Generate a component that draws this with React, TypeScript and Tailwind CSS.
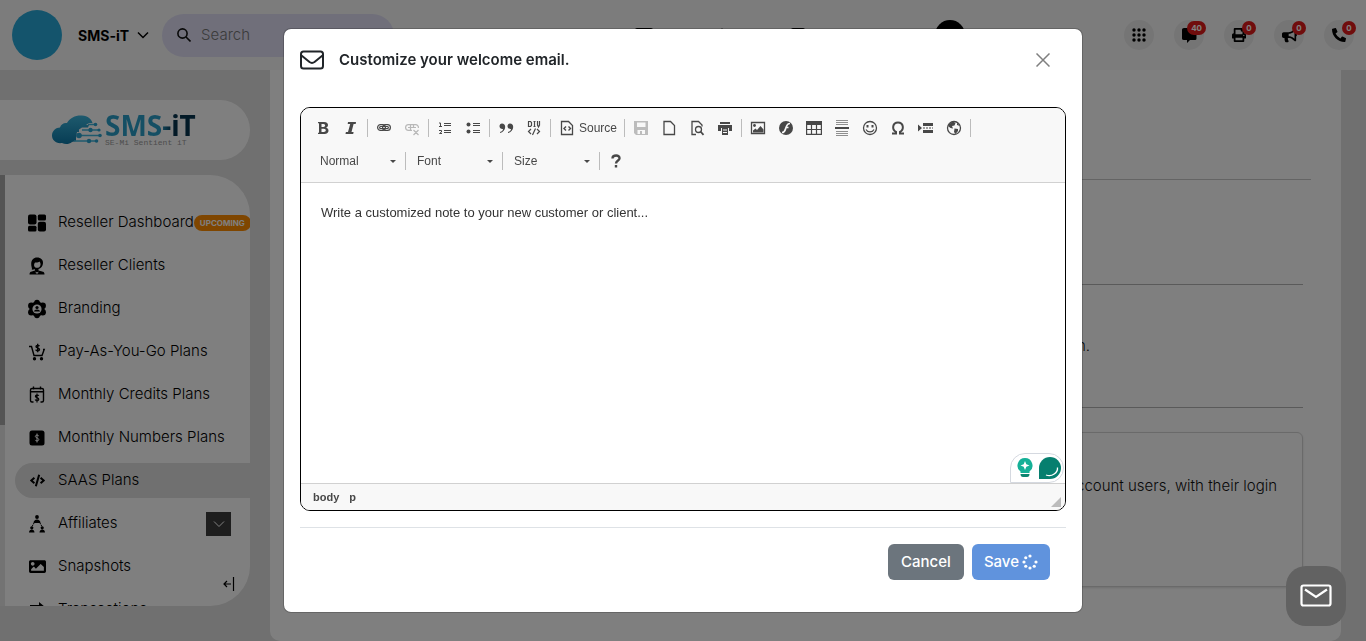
import type { ReactNode } from "react";
import { FaBullhorn, FaCode, FaImage, FaPhoneAlt, FaPrint } from "react-icons/fa";

const BRAND = "SMS-iT";

function Cloud() {
  return (
    <svg viewBox="0 0 50 30" className="h-[30px] w-[50px]">
      <defs>
        <linearGradient id="cloud" x1="0" y1="0" x2="0" y2="1">
          <stop offset="0" stopColor="#3cb4dc" />
          <stop offset="1" stopColor="#0e7aa8" />
        </linearGradient>
      </defs>
      <path
        fill="url(#cloud)"
        d="M10 28C4 29 0 25 0 20.500C0 16 4 12.500 8 12.500C9 9 12 7.500 15 8C18 2.500 24 0 30 0.500C36 1 39.500 4 40.500 8H37L34 10H37L36 12.500H30L27 14.500V17H25L24 23V26L20 27C17 29.500 13 29.500 10 28Z"
      />
      <g fill="none" stroke="#3cb4dc" strokeWidth="1.400">
        <path d="M36 9.500H43M30 15H46M27 20.500H47M22 26H44" />
      </g>
      <g fill="#2ba3cf">
        <circle cx="43.500" cy="9.500" r="1.800" />
        <circle cx="38.500" cy="15" r="2.200" />
        <circle cx="47" cy="15" r="1.600" />
        <circle cx="27" cy="20.500" r="2.800" />
        <circle cx="48" cy="20.500" r="1.800" />
        <circle cx="37" cy="26" r="2.200" />
        <circle cx="44.500" cy="26" r="1.800" />
      </g>
    </svg>
  );
}

function DashboardIcon() {
  return (
    <svg viewBox="0 0 18 18" className="h-[18px] w-[18px]">
      <rect x="0" y="0.500" width="8.500" height="10" rx="2" />
      <rect x="9.800" y="0.500" width="8.200" height="6" rx="1.500" />
      <rect x="0" y="11.800" width="8.500" height="5.700" rx="1.500" />
      <rect x="9.800" y="7.800" width="8.200" height="9.700" rx="2" />
    </svg>
  );
}

function ClientIcon() {
  return (
    <svg viewBox="0 0 18 18" className="h-[18px] w-[18px]">
      <path
        fillRule="evenodd"
        d="M9 0.500C13 0.500 15.300 3 15 6.200C14.800 9 13 11.500 10.500 12V13.500L15 14.700C16 15 16.500 16 16.500 17.500H1.500C1.500 16 2 15 3 14.700L7 13.600V12.300L3.800 12.800C4.500 11.500 3 9.500 3.200 6.500C3.400 3 5.500 0.500 9 0.500ZM7 5.500C5.800 7 5.700 9 7 10.200C8.800 11.600 12 10.800 12.500 8C12.700 6.700 12.300 5.500 11.500 4.500C10.500 5.500 9 5.700 7 5.500Z"
      />
      <path fill="#fff" d="M7.500 14.500L9 15.500L10.500 14.500L10 16.500H8Z" />
    </svg>
  );
}

function BrandIcon() {
  return (
    <svg viewBox="0 0 20 20" className="h-5 w-5">
      <g>
        <circle cx="10" cy="10" r="7.500" />
        <circle cx="10" cy="3.500" r="2.800" />
        <circle cx="10" cy="16.500" r="2.800" />
        <circle cx="4.300" cy="6.700" r="3.200" />
        <circle cx="15.700" cy="6.700" r="3.200" />
        <circle cx="4.300" cy="13.300" r="3.200" />
        <circle cx="15.700" cy="13.300" r="3.200" />
      </g>
      <circle cx="10" cy="10" r="4.600" fill="#fff" />
      <circle cx="10" cy="8.500" r="1.600" />
      <path d="M7 12.500C7 9.800 13 9.800 13 12.500Z" />
    </svg>
  );
}

function CartIcon() {
  return (
    <svg viewBox="0 0 18 18" className="h-[18px] w-[18px]" fill="none" stroke="#000" strokeWidth="1.400">
      <path d="M1 3.500H3.500L6 12.500H14L16.200 6.500H15" />
      <path d="M11.300 3.300C11 2.200 8 2.200 8 3.700C8 5.200 11.500 4.700 11.500 6.500C11.500 8.200 8 8.200 7.800 6.700M9.700 0.800V9.300" />
      <circle cx="6.500" cy="15.700" r="1" fill="#000" />
      <circle cx="13.500" cy="15.700" r="1" fill="#000" />
    </svg>
  );
}

function CalendarIcon() {
  return (
    <svg viewBox="0 0 18 18" className="h-[18px] w-[18px]" fill="none" stroke="#000" strokeWidth="1.400">
      <path d="M5.500 16H4C3 16 2.500 15.500 2.500 14.500V4C2.500 3 3 2.500 4 2.500H14C15 2.500 15.500 3 15.500 4V14.500C15.500 15.500 15 16 14 16H12.500M2.500 5.700H15.500M5.500 0.500V3.500M12.500 0.500V3.500" />
      <path strokeWidth="1.200" d="M10.800 9.800C10.300 8.700 7.300 8.900 7.400 10.400C7.500 11.900 10.800 11.400 10.800 13.200C10.800 14.900 7.500 14.900 7.200 13.500M9 7.500V16.500" />
    </svg>
  );
}

function DollarIcon() {
  return (
    <svg viewBox="0 0 18 18" className="h-[18px] w-[18px]" fill="none">
      <rect x="1.500" y="1.500" width="15" height="15" rx="2.500" fill="#000" />
      <path stroke="#fff" d="M10.800 7C10.300 5.700 7.300 5.900 7.300 7.400C7.400 9.200 10.800 8.700 10.800 10.600C10.800 12.300 7.500 12.300 7.200 10.900M9 4.500V13.500" />
    </svg>
  );
}

function AffiliateIcon() {
  return (
    <svg viewBox="0 0 18 18" className="h-[18px] w-[18px]">
      <circle cx="9" cy="2" r="1.900" />
      <path d="M5.500 8C5.500 3.200 12.500 3.200 12.500 8Z" />
      <circle cx="3.800" cy="12.800" r="1.600" />
      <path d="M1 17.500C1 13.500 6.500 13.500 6.500 17.500Z" />
      <circle cx="14.200" cy="12.800" r="1.600" />
      <path d="M11.500 17.500C11.500 13.500 17 13.500 17 17.500Z" />
      <path fill="none" stroke="#000" strokeDasharray="1.500 0.700" d="M6 8L3.800 12M12 8L14.200 12" />
    </svg>
  );
}

function TransactionIcon() {
  return (
    <svg viewBox="0 0 18 18" className="h-[18px] w-[18px]">
      <path d="M2 4H11V1L17 6L11 10V7H2ZM16 11H7V8L1 13L7 17V14H16Z" />
    </svg>
  );
}

const navItems = [
  { label: "Reseller Dashboard", icon: <DashboardIcon />, badge: "UPCOMING" },
  { label: "Reseller Clients", icon: <ClientIcon /> },
  { label: "Branding", icon: <BrandIcon /> },
  { label: "Pay-As-You-Go Plans", icon: <CartIcon /> },
  { label: "Monthly Credits Plans", icon: <CalendarIcon /> },
  { label: "Monthly Numbers Plans", icon: <DollarIcon /> },
  { label: "SAAS Plans", icon: <FaCode size={15} />, active: true },
  { label: "Affiliates", icon: <AffiliateIcon />, expandable: true },
  { label: "Snapshots", icon: <FaImage size={17} /> },
  { label: "Transactions", icon: <TransactionIcon /> },
];

function ChevronDown({ className }: { className: string }) {
  return (
    <svg viewBox="0 0 12 8" className={className} fill="none" stroke="currentColor">
      <path d="M1 1.500L6 6.500L11 1.500" />
    </svg>
  );
}

function Sidebar() {
  return (
    <aside className="flex w-[270px] shrink-0 flex-col gap-[15px] pt-[30px] pb-[35px]">
      <div className="mr-5 flex h-[60px] shrink-0 items-center rounded-r-full bg-white pl-[52px]">
        <Cloud />
        <div className="ml-[3px] flex flex-col pb-[2px]">
          <span className="bg-linear-to-r from-[#2b9fc9] from-60% to-[#06344f] to-75% bg-clip-text font-['Noto_Sans'] text-[28px] leading-7 font-bold whitespace-nowrap text-transparent">
            {BRAND}
          </span>
          <span className="font-['Liberation_Mono'] text-[8px] leading-2 whitespace-nowrap text-[#9a9a9a]">
            SE-Mi Sentient iT
          </span>
        </div>
      </div>
      <div className="relative mr-5 flex min-h-0 flex-1 overflow-hidden rounded-r-[40px] bg-white">
        <div className="w-[5px] shrink-0 bg-[#e6e6e6]">
          <div className="h-[58%] bg-[#a8a8a8]" />
        </div>
        <nav className="flex min-w-0 flex-1 flex-col gap-2 overflow-hidden pt-[30px] pl-[10px]">
          {navItems.map((item) => (
            <div
              key={item.label}
              className={
                item.active
                  ? "flex h-[35px] shrink-0 items-center rounded-l-full bg-[#e0e0e0]"
                  : "flex h-[35px] shrink-0 items-center"
              }
            >
              <a href="#" className="flex items-center pl-[11px] text-[15px] font-light whitespace-nowrap text-black">
                <span className="mr-[10px] flex w-[22px] justify-center">{item.icon}</span>
                {item.label}
              </a>
              {item.badge && (
                <span className="rounded-full bg-[#ff8c00] px-[6px] text-[8px] leading-4 font-bold text-white">
                  {item.badge}
                </span>
              )}
              {item.expandable && (
                <button
                  aria-label="Expand affiliates"
                  className="mr-[19px] ml-auto flex h-6 w-[25px] items-center justify-center bg-[#3c3c3c] text-white"
                >
                  <ChevronDown className="h-2 w-3" />
                </button>
              )}
            </div>
          ))}
        </nav>
        <button aria-label="Collapse sidebar" className="absolute right-[15px] bottom-[15px]">
          <svg viewBox="0 0 14 14" className="h-[14px] w-[14px]" fill="none" stroke="#000" strokeWidth="1.200">
            <path d="M10 7H3M6 4L3 7L6 10M12.500 0V14" />
          </svg>
        </button>
      </div>
    </aside>
  );
}

function Dots() {
  return (
    <svg viewBox="0 0 14 14" className="h-[14px] w-[14px]">
      {[2, 7, 12].map((y) => [2, 7, 12].map((x) => <circle key={x + "-" + y} cx={x} cy={y} r="1.700" />))}
    </svg>
  );
}

function ChatIcon() {
  return (
    <svg viewBox="0 0 16 16" className="h-4 w-4">
      <path d="M3 1H14Q15.500 1 15.500 2.500V11.500Q15.500 13 14 13H9L6 16V13H3Q1 13 1 11.500V2.500Q1 1 3 1Z" />
    </svg>
  );
}

const actions = [
  { label: "Apps", icon: <Dots /> },
  { label: "Messages", icon: <ChatIcon />, count: 40 },
  { label: "Print", icon: <FaPrint size={14} />, count: 0 },
  { label: "Campaigns", icon: <FaBullhorn size={15} />, count: 0 },
  { label: "Calls", icon: <FaPhoneAlt size={14} />, count: 0 },
];

function Header() {
  return (
    <header className="flex h-[70px] shrink-0 items-center bg-[#f9f9f9] px-3">
      <div className="h-[50px] w-[50px] shrink-0 rounded-full bg-[#29a9d8]" />
      <button className="ml-4 flex items-center gap-2 text-[14px] font-bold text-black">
        {BRAND}
        <ChevronDown className="h-2 w-3 stroke-[1.5]" />
      </button>
      <label className="ml-[13px] flex h-[43px] w-[232px] shrink-0 items-center rounded-full bg-[#e0dff5] pl-[15px]">
        <svg viewBox="0 0 14 14" className="h-[14px] w-[14px] shrink-0" fill="none" stroke="#111" strokeWidth="1.600">
          <circle cx="5.500" cy="5.500" r="4.600" />
          <path d="M9 9L13.500 13.500" />
        </svg>
        <input
          type="text"
          aria-label="Search"
          placeholder="Search"
          className="ml-[10px] h-6 w-16 bg-transparent text-[15px] leading-6 font-light outline-none placeholder:text-[#777]"
        />
      </label>
      <div className="ml-[241px] flex items-center gap-[60px]">
        <span className="h-[14px] w-[18px] rounded-xs bg-black" />
        <svg viewBox="0 0 18 14" className="h-[14px] w-[18px]">
          <path d="M9 0L17 14H1Z" />
        </svg>
        <span className="h-[14px] w-[14px] rounded-xs bg-black" />
      </div>
      <span className="ml-[130px] h-[30px] w-[30px] shrink-0 rounded-full bg-black" />
      <div className="ml-auto flex gap-5">
        {actions.map((action) => (
          <button
            key={action.label}
            aria-label={action.label}
            className="relative flex h-[30px] w-[30px] items-center justify-center rounded-full bg-[#eaeaea] text-black"
          >
            {action.icon}
            {action.count !== undefined && (
              <span className="absolute top-px -right-[2px] min-w-[14px] rounded-full bg-[#e01b1b] px-1 text-center text-[8px] leading-[14px] font-bold text-white">
                {action.count}
              </span>
            )}
          </button>
        ))}
      </div>
    </header>
  );
}

function Content() {
  return (
    <main className="mr-[25px] min-w-0 flex-1 overflow-hidden rounded-b-[10px] bg-white pr-[30px] pl-8 text-[15px] font-light text-[#111]">
      <div className="h-[110px] border-b border-[#c8c8c8]" />
      <div className="mr-2">
        <div className="h-[105px] border-b border-[#b4b4b4]" />
        <div className="flex h-[123px] items-center justify-end border-b border-[#b4b4b4] pr-[213px]">n.</div>
        <div className="mt-6 flex h-[155px] justify-end rounded-md border border-[#d4d4d4] pt-[42px] pr-[25px] shadow-sm">
          account users, with their login
        </div>
      </div>
    </main>
  );
}

function Glyph({ children }: { children: ReactNode }) {
  return (
    <svg viewBox="0 0 16 16" className="h-4 w-4" fill="none" stroke="#484848" strokeWidth="1">
      {children}
    </svg>
  );
}

const glyphs: Record<string, ReactNode> = {
  Bold: (
    <path
      fill="#484848"
      stroke="none"
      fillRule="evenodd"
      d="M3 2H9C12 2 13 3.500 13 5C13 6.500 12 7.400 11 7.700C12.500 8 13.500 9 13.500 10.700C13.500 12.500 12 14 9.500 14H3V12.700H4V3.300H3ZM6.500 4V7H8.500C10.700 7 10.700 4 8.500 4ZM6.500 8.800V12H8.700C11.500 12 11.500 8.800 8.700 8.800Z"
    />
  ),
  Italic: <path fill="#484848" stroke="none" d="M5 2H13L12.700 4H10.600L8.500 12H10.600L10.200 14H2.500L2.900 12H5L7.200 4H4.700Z" />,
  Link: (
    <g strokeWidth="1.200">
      <rect x="1.600" y="4.600" width="7.800" height="5.800" rx="2.900" />
      <rect x="6.600" y="4.600" width="7.800" height="5.800" rx="2.900" />
      <rect x="3.600" y="6.500" width="8.800" height="2" rx="1" />
    </g>
  ),
  Unlink: (
    <g stroke="#b8b8b8" strokeWidth="1.200">
      <path d="M8 10.400H4.500A2.900 2.900 0 0 1 4.500 4.600H8M8 4.600H11.500A2.900 2.900 0 0 1 14.400 8" />
      <path d="M4 7.500H12M6.500 5V10M9.500 5V8M9.500 10L14.500 15M14.500 10L9.500 15" />
    </g>
  ),
  "Numbered list": (
    <g>
      <path d="M7 3.500H14M7 5.500H14M7 10.500H14M7 12.500H14" />
      <path d="M2 3H3.500V7M2 6.500H5M2 10.500H4.500V12L2.500 13.500H5" />
    </g>
  ),
  "Bulleted list": (
    <g>
      <path d="M8 3.500H15M8 5.500H15M8 10.500H15M8 12.500H15" />
      <circle cx="3.500" cy="4.500" r="2" fill="#484848" stroke="none" />
      <circle cx="3.500" cy="11.500" r="2" fill="#484848" stroke="none" />
    </g>
  ),
  Quote: (
    <path
      fill="#484848"
      stroke="none"
      d="M4 3.500C6 3.500 7.200 5 7.200 7C7.200 10 5 12.300 2 13V12C4 11.300 5 10.300 5 9C3 9.300 1.500 8 1.500 6.300C1.500 4.700 2.500 3.500 4 3.500ZM12 3.500C14 3.500 15.200 5 15.200 7C15.200 10 13 12.300 10 13V12C12 11.300 13 10.300 13 9C11 9.300 9.500 8 9.500 6.300C9.500 4.700 10.500 3.500 12 3.500Z"
    />
  ),
  Div: (
    <path
      strokeWidth="1.200"
      d="M2.500 1.500V6.500H4.500L5.500 5.500V2.500L4.500 1.500H2M8.500 1V7M7.500 1.500H9.500M7.500 6.500H9.500M11.500 1V5L12.500 7L13.500 5V1M5 9L2.500 11.500L5 14M11 9L13.500 11.500L11 14M9.500 8.500L6.500 15"
    />
  ),
  Save: (
    <path
      fill="#bcbcbc"
      stroke="none"
      fillRule="evenodd"
      d="M1 1H15V15H3L1 13ZM4 2.500V7H12.500V2.500ZM4.500 10V14H7V11H9V14H12V10Z"
    />
  ),
  "New page": <path strokeWidth="1.300" d="M3 1.500H9.500L13.500 5.500V14.500H3Z" />,
  Preview: (
    <g strokeWidth="1.300">
      <path d="M7 14.500H3V1.500H9.500L13 5V6.500" />
      <circle cx="9.500" cy="9.500" r="3" />
      <path strokeWidth="1.800" d="M11.500 11.500L14.500 14.800" />
    </g>
  ),
  Print: (
    <g fill="#484848" stroke="none">
      <rect x="3" y="2" width="10" height="2" />
      <path d="M1 5H15V11H12V8H4V11H1Z" />
      <path fillRule="evenodd" d="M5 8H11V15H5ZM6 9.500V10.500H10V9.500ZM6 12V13H10V12Z" />
    </g>
  ),
  Image: (
    <g>
      <path strokeWidth="1.300" d="M1.500 2.500H14.500V13.500H1.500Z" />
      <circle cx="4.500" cy="5.500" r="1.400" fill="#484848" stroke="none" />
      <path fill="#484848" stroke="none" d="M3 12.500V10.500L5.500 8.500L7 10L10.500 6L13.500 9.500V12.500Z" />
    </g>
  ),
  Flash: (
    <g>
      <circle cx="8" cy="8" r="7" fill="#484848" stroke="none" />
      <path stroke="#f8f8f8" strokeWidth="1.700" d="M12 3.500C8.500 3.500 8.500 7 7.500 9C7 11 6 12.500 4 12.500M7.500 7.500H10.500" />
    </g>
  ),
  Table: (
    <g>
      <path fill="#484848" stroke="none" d="M0 1H16V5H0Z" />
      <path strokeWidth="1.200" d="M0.600 4V14.400H15.400V4M0.600 9.500H15.400M5.500 4V14M10.500 4V14" />
    </g>
  ),
  "Horizontal line": (
    <g>
      <path stroke="#8f8f8f" d="M2 0.500H14M2 2.500H14M2 4.500H14M2 11.500H14M2 13.500H14M2 15.500H14" />
      <path strokeWidth="2" d="M1 8H15" />
    </g>
  ),
  Smiley: (
    <g>
      <circle cx="8" cy="8" r="6.500" strokeWidth="1.300" />
      <path strokeWidth="2" d="M5.500 5V7.500M10.500 5V7.500" />
      <path strokeWidth="1.200" d="M4 9.500C5.500 12.700 10.500 12.700 12 9.500" />
    </g>
  ),
  "Special character": (
    <path strokeWidth="2" d="M2 13.500H6V11.800C1.500 9.500 2.500 2.500 8 2.500C13.500 2.500 14.500 9.500 10 11.800V13.500H14" />
  ),
  "Page break": (
    <g>
      <path fill="#484848" stroke="none" d="M0 4.500L4 8L0 11.500ZM5 3H15V6H5ZM5 10H15V13H5Z" />
      <path strokeDasharray="2 1" d="M5 8H15" />
    </g>
  ),
  Iframe: (
    <g>
      <circle cx="8" cy="8" r="6.500" strokeWidth="1.300" />
      <path
        fill="#484848"
        stroke="none"
        d="M3 4L7 1.500L9.500 3L8.500 5.500L6 6L7 8.500L4.500 8L2 6ZM11 2.500L14 6L11 5ZM8.500 8.500L12 9L12 11L9.500 14L8 12Z"
      />
    </g>
  ),
};

const toolbar = [
  ["Bold", "Italic"],
  ["Link", "Unlink"],
  ["Numbered list", "Bulleted list"],
  ["Quote", "Div"],
  ["Source"],
  ["Save", "New page", "Preview", "Print"],
  ["Image", "Flash", "Table", "Horizontal line", "Smiley", "Special character", "Page break", "Iframe"],
];

const Separator = () => <span className="mx-[2px] h-[18px] w-px bg-[#bcbcbc]" />;

function Combo({ label }: { label: string }) {
  return (
    <label className="relative flex items-center text-[12px]">
      <select
        aria-label={label}
        className="h-7 w-[92px] appearance-none bg-transparent pl-[9px] text-[#484848] outline-none"
      >
        <option>{label}</option>
      </select>
      <span className="pointer-events-none absolute right-[7px] border-x-[3px] border-t-[3px] border-x-transparent border-t-[#484848]" />
    </label>
  );
}

function Editor() {
  return (
    <div className="mt-8 overflow-hidden rounded-[10px] border border-black font-['Liberation_Sans',Arial,sans-serif] text-[#484848]">
      <div className="flex flex-col gap-[5px] border-b border-[#d1d1d1] bg-[#f8f8f8] px-2 pt-[6px] pb-[7px]">
        <div className="flex flex-wrap items-center">
          {toolbar.map((group) => (
            <div key={group[0]} className="flex items-center">
              {group.map((name) =>
                name === "Source" ? (
                  <button key={name} className="flex h-7 items-center gap-1 pr-[5px] pl-[6px] text-[12px]">
                    <Glyph>
                      <path strokeWidth="1.300" d="M2.500 1.500H9.500L13.500 5.500V14.500H2.500Z" />
                      <path strokeWidth="1.400" d="M7 6.500L5 8.500L7 10.500M9.500 6.500L11.500 8.500L9.500 10.500" />
                    </Glyph>
                    Source
                  </button>
                ) : (
                  <button key={name} aria-label={name} className="flex h-7 w-7 items-center justify-center">
                    <Glyph>{glyphs[name]}</Glyph>
                  </button>
                ),
              )}
              <Separator />
            </div>
          ))}
        </div>
        <div className="flex items-center pl-[2px]">
          {["Normal", "Font", "Size"].map((label) => (
            <div key={label} className="flex items-center">
              <Combo label={label} />
              <Separator />
            </div>
          ))}
          <button aria-label="About" className="flex h-7 w-7 items-center justify-center">
            <Glyph>
              <path strokeWidth="2.400" d="M4.500 5.500C4.500 1.500 12 1.500 11.500 5.500C11.300 7.500 8 7.500 8 10.500M8 12V14.500" />
            </Glyph>
          </button>
        </div>
      </div>
      <div className="relative flex">
        <textarea
          aria-label="Welcome email"
          defaultValue="Write a customized note to your new customer or client..."
          className="h-[300px] w-full resize-none bg-white px-5 py-5 text-[13px] leading-5 text-[#333] outline-none"
        />
        <div className="absolute right-px bottom-0 flex h-[30px] w-[54px] items-center gap-[6px] rounded-t-2xl rounded-br-2xl border border-[#d5d9e0] bg-white pl-[6px]">
          <svg viewBox="0 0 16 20" className="h-5 w-4">
            <path fill="#15b097" d="M8 0A7.500 7.500 0 0 1 12.500 13.500V15H3.500V13.500A7.500 7.500 0 0 1 8 0Z" />
            <path fill="#fff" d="M8 3L9.300 6.200L12.500 7.500L9.300 8.800L8 12L6.700 8.800L3.500 7.500L6.700 6.200Z" />
            <path fill="#0c8570" d="M3.500 16H12.500Q12.500 19 10 19H6Q3.500 19 3.500 16Z" />
          </svg>
          <svg viewBox="0 0 22 22" className="h-[22px] w-[22px]">
            <path fill="#067f6f" d="M11 0A11 11 0 0 1 11 22H0V11A11 11 0 0 1 11 0Z" />
            <path fill="none" stroke="#fff" strokeWidth="1.300" d="M18.500 10.500C19 15.500 13 20.500 7 18" />
          </svg>
        </div>
      </div>
      <div className="flex h-[27px] items-center gap-[10px] border-t border-[#d1d1d1] bg-[#f8f8f8] pl-3 text-[11px] font-bold">
        <span>body</span>
        <span>p</span>
        <svg viewBox="0 0 10 10" className="mt-[9px] mr-1 ml-auto h-[10px] w-[10px]">
          <path fill="#bcbcbc" d="M10 0V10H0Z" />
        </svg>
      </div>
    </div>
  );
}

function Spinner() {
  const dots = [0, 45, 90, 135, 180, 225, 270];
  return (
    <svg viewBox="0 0 16 16" className="h-4 w-4" fill="#fff">
      {dots.map((a) => (
        <circle
          key={a}
          cx={8 + 6 * Math.cos((a * Math.PI) / 180)}
          cy={8 + 6 * Math.sin((a * Math.PI) / 180)}
          r="1.600"
        />
      ))}
    </svg>
  );
}

function EmailDialog() {
  return (
    <div className="fixed inset-0 overflow-hidden bg-black/50 pt-7">
      <div
        role="dialog"
        aria-labelledby="dialog-title"
        className="mx-auto max-w-[800px] rounded-lg border border-black/20 bg-white bg-clip-padding px-4 pb-8"
      >
        <div className="flex items-center pt-4">
          <svg viewBox="0 0 24 20" className="h-[20px] w-6" fill="none" stroke="#212529" strokeWidth="2">
            <rect x="1" y="1.500" width="22" height="17" rx="2.500" />
            <path d="M1.500 5.500L9.500 12Q12 13.800 14.500 12L22.500 5.500" />
          </svg>
          <h1 id="dialog-title" className="ml-[15px] text-[15px] leading-[30px] font-semibold text-[#212529]">
            Customize your welcome email.
          </h1>
          <button aria-label="Close" className="mr-4 ml-auto">
            <svg viewBox="0 0 14 14" className="h-[14px] w-[14px]" stroke="#7f7f7f" strokeWidth="1.500">
              <path d="M0.500 0.500L13.500 13.500M13.500 0.500L0.500 13.500" />
            </svg>
          </button>
        </div>
        <Editor />
        <div className="mt-4 flex justify-end gap-2 border-t border-[#dee2e6] pt-4 pr-4 text-[15px] font-medium text-white">
          <button className="h-9 rounded-md bg-[#6c757d] px-[13px]">Cancel</button>
          <button className="flex h-9 items-center gap-[3px] rounded-md bg-[#6093dd] px-3">
            Save
            <Spinner />
          </button>
        </div>
      </div>
    </div>
  );
}

export default function App() {
  return (
    <div className="flex h-screen flex-col overflow-hidden bg-[#e0e0e0] font-[Inter,sans-serif]">
      <Header />
      <div className="flex min-h-0 flex-1">
        <Sidebar />
        <Content />
      </div>
      <EmailDialog />
      <button
        aria-label="Open mail"
        className="fixed right-5 bottom-[15px] flex h-[60px] w-[60px] items-center justify-center rounded-[20px] bg-[#626262]"
      >
        <svg viewBox="0 0 32 24" className="h-6 w-8" fill="none" stroke="#fff" strokeWidth="2.200">
          <rect x="1.500" y="1.500" width="29" height="20" rx="2" />
          <path d="M5 5.500L16 13L27 5.500" />
        </svg>
      </button>
    </div>
  );
}
